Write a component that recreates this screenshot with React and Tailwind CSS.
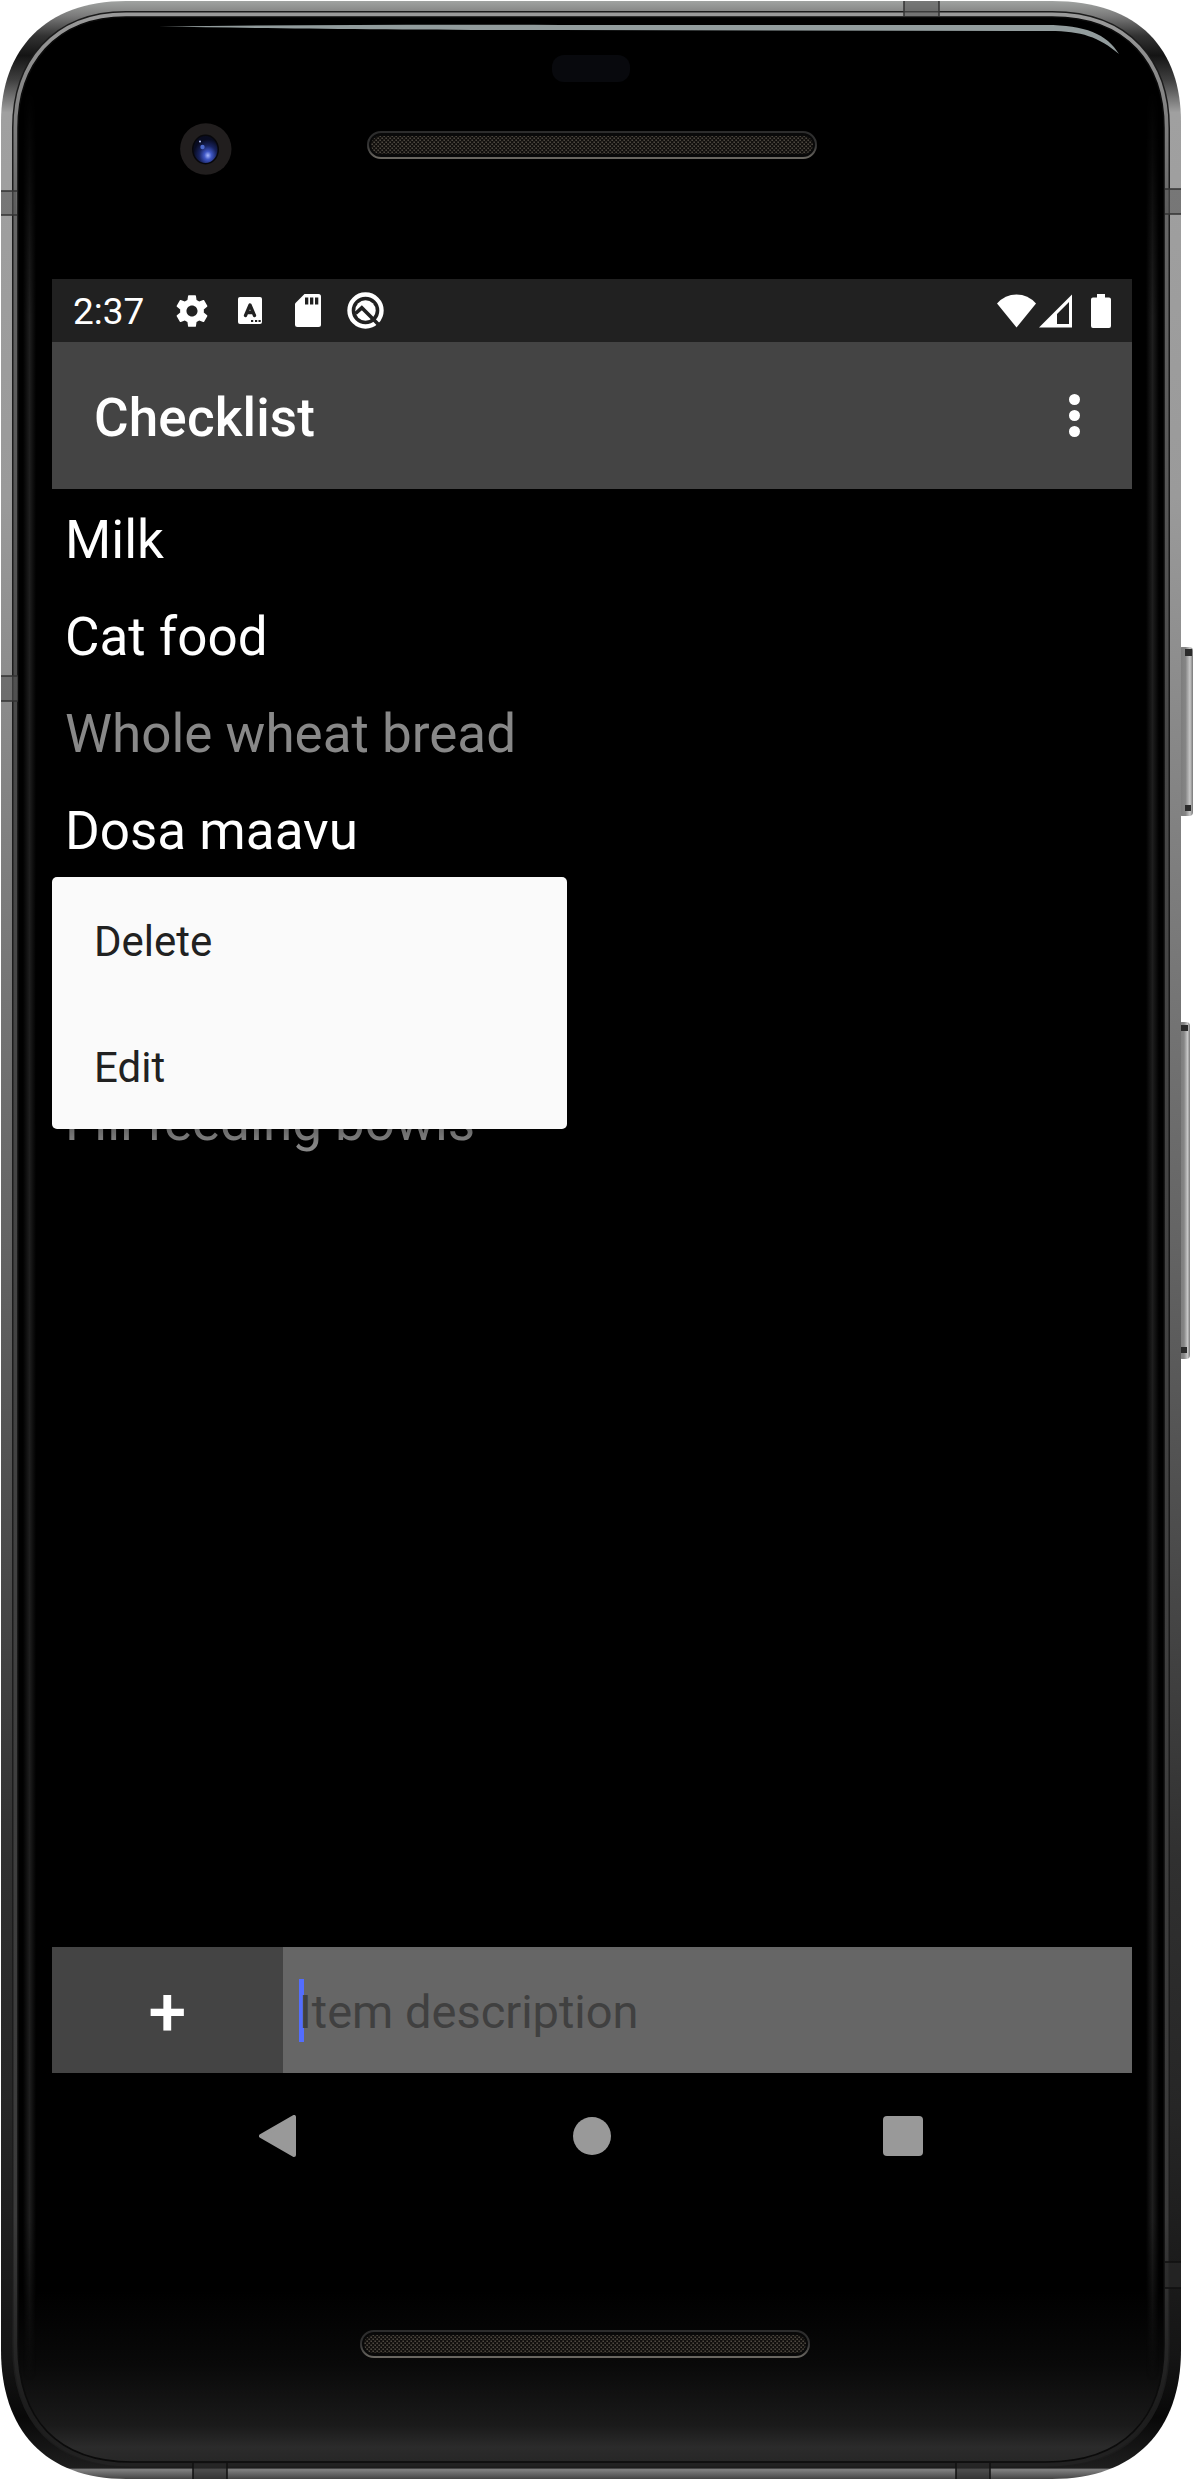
const ROWS = [
  { label: "Milk" },
  { label: "Cat food" },
  { label: "Whole wheat bread", done: true },
  { label: "Dosa maavu" },
  {},
  {},
  { label: "Fill feeding bowls", done: true },
];

function StatusBar() {
  return (
    <div className="flex h-[63px] items-center bg-[#212121] pl-[21px] text-white">
      <span className="w-[100px] pt-[2px] text-[37px] leading-[63px]">2:37</span>
      <svg className="h-[40px] w-[38px]" viewBox="0 0 24 24" fill="currentColor">
        <path d="M19.43 12.98c.04-.32.07-.64.07-.98s-.03-.66-.07-.98l2.11-1.65c.19-.15.24-.42.12-.64l-2-3.46c-.12-.22-.39-.3-.61-.22l-2.49 1c-.52-.4-1.08-.73-1.69-.98l-.38-2.65A.488.488 0 0 0 14 2h-4c-.25 0-.46.18-.49.42l-.38 2.65c-.61.25-1.17.59-1.69.98l-2.49-1c-.23-.09-.49 0-.61.22l-2 3.46c-.13.22-.07.49.12.64l2.11 1.65c-.04.32-.07.65-.07.98s.03.66.07.98l-2.11 1.65c-.19.15-.24.42-.12.64l2 3.46c.12.22.39.3.61.22l2.49-1c.52.4 1.08.73 1.69.98l.38 2.65c.03.24.24.42.49.42h4c.25 0 .46-.18.49-.42l.38-2.65c.61-.25 1.17-.59 1.69-.98l2.49 1c.23.09.49 0 .61-.22l2-3.46c.12-.22.07-.49-.12-.64l-2.11-1.65zM12 15.5c-1.93 0-3.5-1.57-3.5-3.5s1.57-3.5 3.5-3.5 3.5 1.57 3.5 3.5-1.57 3.5-3.5 3.5z" />
      </svg>
      <svg className="ml-[27px] h-[27px] w-[24px]" viewBox="0 0 24 27">
        <rect width="24" height="27" rx="2" fill="#fff" />
        <path d="M7.500 18.500 L12 8 L16.500 18.500 M9 15.500 H15" fill="none" stroke="#212121" strokeWidth="3.300" strokeLinecap="round" strokeLinejoin="round" />
        <path d="M13 23h2.200v2H13zM17 23h2.200v2H17zM20.500 23h2.200v2h-2.200z" fill="#212121" />
      </svg>
      <svg className="ml-[33px] h-[33px] w-[26px]" viewBox="0 0 26 33">
        <path d="M9.500 0H23.500Q26 0 26 2.500V30.500Q26 33 23.500 33H2.500Q0 33 0 30.500V9.500Z" fill="#fff" />
        <path d="M10 3.500h3.300v7H10zM15 3.500h3.300v7H15zM20 3.500h3.300v7H20z" fill="#212121" />
      </svg>
      <svg className="ml-[26px] h-[37px] w-[37px]" viewBox="0 0 37 37">
        <circle cx="18.500" cy="18.500" r="16" fill="none" stroke="#fff" strokeWidth="4.400" />
        <circle cx="18.500" cy="18.500" r="10.200" fill="#fff" />
        <path d="M8.500 21.500L14.800 15.800L33 34" fill="none" stroke="#212121" strokeWidth="3.600" />
      </svg>
      <div className="mr-[21px] ml-auto flex items-center">
        <svg className="h-[34px] w-[39px]" viewBox="0 0 39 34">
          <path d="M0 9.500Q8 .5 19.500 .5T39 9.500L19.500 33.500Z" fill="#fff" />
        </svg>
        <svg className="ml-[3px] h-[34px] w-[33px]" viewBox="0 0 33 34">
          <path fillRule="evenodd" d="M33 .5V33.500H0ZM30 8L18 20V30H30Z" fill="#fff" />
        </svg>
        <svg className="ml-[19px] h-[34px] w-[20px]" viewBox="0 0 20 34">
          <path d="M6 0H14V3.500H18Q20 3.500 20 5.500V32Q20 34 18 34H2Q0 34 0 32V5.500Q0 3.500 2 3.500H6Z" fill="#fff" />
        </svg>
      </div>
    </div>
  );
}

function AppBar() {
  return (
    <div className="flex h-[147px] items-center justify-between bg-[#444] pr-[52px] pl-[42px]">
      <h1 className="pt-[5px] text-[53px] leading-[142px] font-medium tracking-[0.15px] text-white">Checklist</h1>
      <div className="flex flex-col gap-[5px]">
        <i className="size-[11px] rounded-full bg-white" />
        <i className="size-[11px] rounded-full bg-white" />
        <i className="size-[11px] rounded-full bg-white" />
      </div>
    </div>
  );
}

function Speaker({ className }) {
  return (
    <svg className={className} viewBox="0 0 450 28">
      <defs>
        <pattern id="mesh" width="4" height="4" patternUnits="userSpaceOnUse">
          <rect width="4" height="4" fill="#12100e" />
          <path d="M.5 .5h1.300v1.500H.5zM2.500 2.500h1.300v1.500H2.500z" fill="#5c564c" />
        </pattern>
        <linearGradient id="rim" x2="0" y2="1">
          <stop offset="0" stopColor="#2c2c2c" />
          <stop offset=".5" stopColor="#333" />
          <stop offset="1" stopColor="#6a6761" />
        </linearGradient>
      </defs>
      <rect x="1" y="1" width="448" height="26" rx="13" fill="#090909" stroke="url(#rim)" strokeWidth="2" />
      <rect x="4" y="5" width="442" height="18" rx="9" fill="url(#mesh)" />
    </svg>
  );
}

/* Metal case, drawn behind the display */
function Case() {
  const outer =
    "M126 1H1052C1140 1 1181 50 1181 122V2350C1181 2430 1135 2479 1052 2479H126C45 2479 1 2430 1 2350V122C1 50 45 1 126 1Z";
  const inner =
    "M126 17H1052C1128 17 1164 65 1164 128V2345C1164 2420 1122 2462 1046 2462H132C58 2462 18 2420 18 2345V128C18 65 55 17 126 17Z";
  return (
    <svg className="absolute inset-0 h-[2480px] w-[1194px]" viewBox="0 0 1194 2480">
      <defs>
        <linearGradient id="metal" x2="0" y2="1">
          <stop offset="0" stopColor="#a0a3a1" />
          <stop offset=".006" stopColor="#7b7b7b" />
          <stop offset=".014" stopColor="#333" />
          <stop offset=".022" stopColor="#141414" />
          <stop offset=".032" stopColor="#404040" />
          <stop offset=".045" stopColor="#a0a0a0" />
          <stop offset=".2" stopColor="#9a9a9a" />
          <stop offset=".35" stopColor="#7e7e7e" />
          <stop offset=".5" stopColor="#646464" />
          <stop offset=".62" stopColor="#4c4c4c" />
          <stop offset=".75" stopColor="#303030" />
          <stop offset=".85" stopColor="#262626" />
          <stop offset=".95" stopColor="#151515" />
          <stop offset=".975" stopColor="#080808" />
          <stop offset=".9955" stopColor="#1e1e1e" />
          <stop offset=".9962" stopColor="#828282" />
          <stop offset="1" stopColor="#444" />
        </linearGradient>
        <linearGradient id="lip" x2="0" y2="1">
          <stop offset="0" stopColor="#9a9a9a" />
          <stop offset=".08" stopColor="#666" />
          <stop offset=".3" stopColor="#484848" />
          <stop offset=".9" stopColor="#3a3a3a" />
          <stop offset=".98" stopColor="#1c1c1c" />
          <stop offset="1" stopColor="#222" />
        </linearGradient>
        <linearGradient id="glass" x2="0" y2="1">
          <stop offset=".93" stopColor="#000" />
          <stop offset=".96" stopColor="#090909" />
          <stop offset=".985" stopColor="#1a1a1a" />
          <stop offset=".994" stopColor="#2b2b2b" />
          <stop offset="1" stopColor="#272727" />
        </linearGradient>
        <linearGradient id="button">
          <stop offset="0" stopColor="#777" />
          <stop offset=".5" stopColor="#858585" />
          <stop offset=".8" stopColor="#c8c8c8" />
          <stop offset="1" stopColor="#777" />
        </linearGradient>
        <linearGradient id="sheen">
          <stop offset="0" stopColor="#1e1e1e" stopOpacity="0" />
          <stop offset=".5" stopColor="#1e1e1e" />
          <stop offset="1" stopColor="#1e1e1e" stopOpacity="0" />
        </linearGradient>
        <linearGradient id="fade" x2="0" y2="1">
          <stop offset="0" stopColor="#000" />
          <stop offset=".1" stopColor="#fff" />
          <stop offset=".93" stopColor="#fff" />
          <stop offset="1" stopColor="#000" />
        </linearGradient>
        <mask id="ends" maskUnits="userSpaceOnUse" x="0" y="90" width="1194" height="2290">
          <rect x="0" y="90" width="1194" height="2290" fill="url(#fade)" />
        </mask>
        <radialGradient id="lens" cx=".6" cy=".72" r=".6">
          <stop offset="0" stopColor="#a9b9ff" />
          <stop offset=".25" stopColor="#3f57c5" />
          <stop offset=".6" stopColor="#18235f" />
          <stop offset="1" stopColor="#080b20" />
        </radialGradient>
      </defs>

      <rect x="1178" y="647" width="15" height="169" rx="4" fill="url(#button)" />
      <path d="M1185 649h7v7h-7zM1185 805h6v6h-6z" fill="#2a2a2a" />
      <rect x="1178" y="1022" width="12" height="337" rx="4" fill="url(#button)" />
      <path d="M1181 1025h7v6h-7zM1181 1347h6v6h-6z" fill="#2a2a2a" />

      <path d={outer} fill="url(#metal)" />
      <path d={inner} fill="none" stroke="#1c1c1c" strokeWidth="12" />
      <path d={inner} fill="none" stroke="url(#lip)" strokeWidth="9" />
      <path d={inner} fill="url(#glass)" stroke="#0b0b0b" strokeWidth="1.500" />

      <g mask="url(#ends)">
        <rect x="23" y="90" width="13" height="2290" fill="url(#sheen)" />
        <rect x="1146" y="90" width="13" height="2290" fill="url(#sheen)" />
      </g>

      <path d="M1 191h15v24H1zM1 676h17v25H1zM1165 189h16v25h-16zM904 1h35v15h-35z" fill="#555" fillOpacity=".55" />
      <path d="M1 191h16M1 215h16M1 676h17M1 701h17M1165 189h16M1165 214h16M904 1v15M939 1v15" stroke="#333" strokeWidth="1.500" />
      <path d="M1165 2262h16v26h-16zM193 2464h34v15h-34zM956 2463h34v16h-34z" fill="#2a2a2a" fillOpacity=".6" />
      <path d="M1165 2262h16M1165 2288h16M193 2463v16M227 2463v16M956 2463v16M990 2463v16" stroke="#111" strokeWidth="1.500" />

      <path d="M159 26.500C300 25 420 24.500 560 25H1046C1085 25 1107 34 1119 54C1099 37 1081 31 1050 31L560 30C380 30 260 28 159 26.500Z" fill="#929c9d" />
      <rect x="552" y="55" width="78" height="27" rx="12" fill="#08090d" />
      <circle cx="205.800" cy="149" r="25.700" fill="#211e1e" />
      <ellipse cx="205.500" cy="149.500" rx="13.500" ry="15" fill="#07070b" />
      <ellipse cx="205.500" cy="149.500" rx="12" ry="13.500" fill="url(#lens)" />
      <circle cx="202.500" cy="147" r="2.200" fill="#4d69cc" />
      <circle cx="200" cy="141.500" r="1" fill="#b9c6ff" />
    </svg>
  );
}

export default function App() {
  return (
    <div className="relative h-[2480px] w-[1194px] overflow-hidden bg-white font-[Roboto,sans-serif]">
      <Case />
      <div className="relative flex flex-col pt-[131px]">
        <Speaker className="ml-[367px] h-[28px] w-[450px]" />
        <main className="mt-[120px] ml-[52px] flex h-[1920px] w-[1080px] flex-col bg-black">
          <StatusBar />
          <AppBar />
          <section className="relative flex-1">
            <ul>
              {ROWS.map(({ label, done }, i) => (
                <li
                  key={i}
                  className={
                    "h-[97px] pl-[13px] text-[53px] leading-[102px] " +
                    (done ? "text-[#888]" : "text-white")
                  }
                >
                  {label}
                </li>
              ))}
            </ul>
            <div className="absolute top-[388px] left-0 h-[252px] w-[515px] rounded-[5px] bg-[#fafafa] pl-[42px] text-[42px] leading-[130px] text-[#212121] shadow-[0_6px_16px_rgba(0,0,0,0.3)]">
              <div className="h-[126px]">Delete</div>
              <div className="h-[126px]">Edit</div>
            </div>
          </section>
          <div className="flex h-[126px] bg-[#666]">
            <button className="w-[231px] bg-[#444] pt-[6px] text-[68px] leading-[120px] font-medium text-white">+</button>
            <div className="flex flex-1 items-center pl-[16px]">
              <i className="h-[63px] w-[5px] bg-[#536dfe]" />
              <span className="-ml-[5px] pt-[4px] text-[47px] leading-[122px] text-[#404040]">Item description</span>
            </div>
          </div>
          <nav className="flex h-[126px] items-center pl-[207px]">
            <svg className="h-[42px] w-[37px]" viewBox="0 0 37 42">
              <path d="M35 2V40L2 21Z" fill="#999" stroke="#999" strokeWidth="4" strokeLinejoin="round" />
            </svg>
            <i className="ml-[277px] size-[38px] rounded-full bg-[#999]" />
            <i className="ml-[272px] size-[40px] rounded-[4px] bg-[#999]" />
          </nav>
        </main>
        <Speaker className="mt-[131px] ml-[359.5px] h-[28px] w-[450px]" />
      </div>
    </div>
  );
}
